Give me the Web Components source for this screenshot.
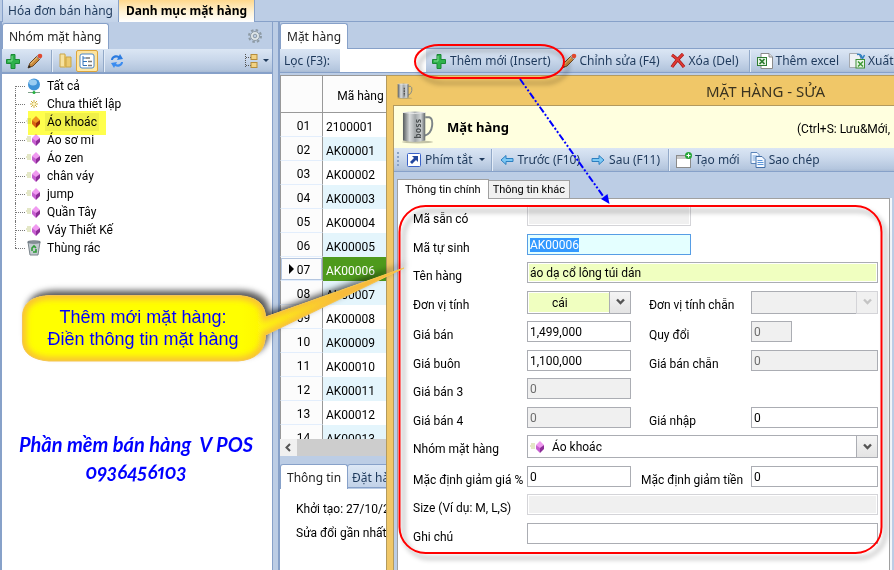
<!DOCTYPE html>
<html lang="vi">
<head>
<meta charset="utf-8">
<title>Danh mục mặt hàng</title>
<style>
  html, body { margin: 0; height: 100%; overflow: hidden; }
  body { background: #bccde5; color: #000; font: 12px/16px Roboto, "Liberation Sans", sans-serif;
    --ui: "Noto Sans", "Open Sans", sans-serif; --line: #87a1c9; --bg: #bccde5; --ink: #1e395b;
    --bar: linear-gradient(#dbe6f4, #cad8eb 45%, #b4c6de 90%, #a9bbd4); }
</style>
</head>
<body>
<pos-app></pos-app>
<script>
const define = (name, html, setup) => {
  const tpl = document.createElement('template');
  tpl.innerHTML = html;
  customElements.define(name, class extends HTMLElement {
    connectedCallback() {
      if (this.shadowRoot) return;
      const root = this.attachShadow({ mode: 'open' });
      root.append(tpl.content.cloneNode(true));
      if (setup) setup.call(this, root);
    }
  });
};

const gem = (a, b, c) => `<path d="M1 5h4M0 7h5M1 9h4" stroke="#c9cf8e"/><path d="M10 2l4 4-4 4-4-4z" fill="${a}"/><path d="M6 6l4 3v5l-4-4z" fill="${b}"/><path d="M14 6l-4 3v5l4-4z" fill="${c}"/>`;
const mug = `<defs><linearGradient id="m"><stop offset="0" stop-color="#555a5c"/><stop offset=".3" stop-color="#d9dcdd"/><stop offset=".55" stop-color="#a2a7a9"/><stop offset=".8" stop-color="#d0d4d5"/><stop offset="1" stop-color="#606668"/></linearGradient></defs>
  <ellipse cx="16" cy="32.500" rx="16" ry="1.500" fill="#8a8a70" opacity=".5"/><path d="M24 7h4q4 1 3 9-1 8-8 10" fill="none" stroke="#7d8588" stroke-width="2"/><path d="M1 2q12-2 23 0v29q-11 3-23 0z" fill="url(#m)"/><path d="M1 2q12 2 23 0" stroke="#eee" fill="none"/>`;
const ICONS = {
  plus: ['0 0 16 16', '<path d="M6 1.500h4v5h4.500v4H10v5H6v-5H1.500v-4H6z" fill="#2fb24c" stroke="#1b8a35"/><path d="M7 3v5H3" stroke="#7fdc8e" fill="none"/>'],
  pencil: ['0 0 16 16', '<path d="M1 15l2-5 7-7 3 3-7 7z" fill="#c98a3c" stroke="#6b4622"/><path d="M1 15l1-3 2 2z" fill="#222"/><path d="M3.500 11L10.500 4" stroke="#f4d08a"/><path d="M9.500 3.500l1.500-1.500 3 3-1.500 1.500z" fill="#b9bdc4" stroke="#666" stroke-width=".5"/><circle cx="13" cy="3" r="2.300" fill="#e0492f"/>'],
  folder: ['0 0 16 16', '<path d="M3 1h5v13H3z" fill="#f6e2a0" stroke="#c9a548"/><path d="M7 3l2-1v13l-2-1z" fill="#e2bd5c"/><path d="M9 4h5v10H9z" fill="#eccb70" stroke="#c9a548"/>'],
  listtree: ['0 0 16 16', '<rect x="1" y="1" width="14" height="14" rx="2" fill="#fff" stroke="#4a86c8"/><path d="M4 3v9.500M4 5h3M4 8.500h4M4 12.500h4" stroke="#3273b8" fill="none"/><path d="M7 5h4M9 8.500h4M9 12.500h4" stroke="#777" stroke-width="1.500"/>'],
  refresh: ['0 0 16 16', '<path d="M2 7c0-4 5-6 8-4l1-2 3 5-6 1 1-2C7 4 4 5 4 7z" fill="#2b7be0"/><path d="M14 9c0 4-5 6-8 4l-1 2-3-5 6-1-1 2c2 1 5 0 5-2z" fill="#3b8cf0"/>'],
  gear: ['0 0 16 16', '<circle cx="8" cy="8" r="6" fill="none" stroke="#8d9aa5" stroke-width="2" stroke-dasharray="2.500 2.200"/><circle cx="8" cy="8" r="4.500" fill="#dfe6e8" stroke="#8d9aa5"/><circle cx="8" cy="8" r="1.800" fill="#bccde5" stroke="#8d9aa5"/>'],
  foldertree: ['0 0 16 16', '<path d="M1.500 1v13M2 4.500h5M2 12.500h5" stroke="#555" stroke-dasharray="1 1" fill="none"/><rect x="7" y="1.500" width="6" height="5" fill="#f2d283" stroke="#b58d3c"/><rect x="7" y="9.500" width="6" height="5" fill="#f2d283" stroke="#b58d3c"/>'],
  globe: ['0 0 16 16', '<circle cx="8" cy="6.500" r="6" fill="#3f93d8"/><ellipse cx="7" cy="4.500" rx="4" ry="3" fill="#b9e0fa" opacity=".75"/><path d="M8 12.500v2M2 14.500h12" stroke="#7fa08a"/><circle cx="8" cy="14.500" r="1.500" fill="#26b23e"/>'],
  spark: ['0 0 16 16', '<path d="M8 4v8M4 8h8M5 5l6 6M11 5l-6 6" stroke="#cdae3c"/><circle cx="8" cy="8" r="1.500" fill="#fff6c0"/>'],
  gem: ['0 0 16 16', gem('#f09af0', '#c65fd0', '#8d2c98')],
  gemred: ['0 0 16 16', gem('#f09a6a', '#d8603a', '#98281a')],
  bin: ['0 0 16 16', '<path d="M2 2h12l-2 13H4z" fill="#c3cbd0" stroke="#7b858c"/><ellipse cx="8" cy="2" rx="6.500" ry="1.300" fill="#8a949b" stroke="#66707a" stroke-width=".7"/><path d="M6 11V8l2-2 2 2M10 9v3H7" stroke="#2f9c37" stroke-width="1.600" fill="none"/>'],
  cross: ['0 0 16 16', '<path d="M2 2c3 2 9 8 12 12M13 1C9 5 5 9 2 14" stroke="#a01818" stroke-width="3.200" fill="none"/><path d="M2 2c3 2 9 8 12 12M13 1C9 5 5 9 2 14" stroke="#e03a34" stroke-width="1.800" fill="none"/>'],
  excel: ['0 0 16 16', '<path d="M4 .5h8l3.500 3.500v11.500H4z" fill="#fff" stroke="#8b8b8b"/><path d="M12 .5V4h3.500" fill="#ddd" stroke="#8b8b8b"/><rect x=".5" y="4.500" width="9" height="8" fill="#e9f5e6" stroke="#2f7d32"/><path d="M2.500 6l5 5M7.500 6l-5 5" stroke="#2f7d32" stroke-width="1.700"/>'],
  export: ['0 0 16 16', '<path d="M.5.500h8l3 3v11H.5z" fill="#eef1f4" stroke="#a5a9ae"/><path d="M8 1.500q4-1 5 3M11 3l2.500 2.500L15.500 2" stroke="#2f7fc0" stroke-width="1.500" fill="none"/><rect x="7" y="6.500" width="8.500" height="8.500" fill="#eaf6e8" stroke="#3f8f36"/><path d="M9 8.500l5 5M14 8.500l-5 5" stroke="#3f9a36" stroke-width="1.500"/>'],
  shortcut: ['0 0 16 16', '<rect x="1.500" y="1.500" width="13" height="13" rx="1" fill="#fff" stroke="#3a62c8"/><path d="M6 4h6v6l-2-2-4 4-2-2 4-4z" fill="#23479e"/>'],
  left: ['0 0 16 16', '<path d="M2 8l5-4.500V6.500h7v3H7v3z" fill="#7cc8f4" stroke="#2c7fc0"/>'],
  right: ['0 0 16 16', '<path d="M14 8L9 3.500V6.500H2v3h7v3z" fill="#7cc8f4" stroke="#2c7fc0"/>'],
  newwin: ['0 0 16 16', '<rect x=".5" y="3.500" width="14" height="12" fill="#fff" stroke="#8b8b8b"/><path d="M1 5.500h13" stroke="#c8c8c8" stroke-width="3"/><circle cx="12.500" cy="3.500" r="3.500" fill="#27a537"/><path d="M12.500 1.500v4M10.500 3.500h4" stroke="#fff"/>'],
  copy: ['0 0 16 16', '<path d="M1 .5h6l2 2v9H1z" fill="#f3f8ff" stroke="#5b84b8"/><path d="M2.500 4h5M2.500 6h5M2.500 8h3" stroke="#76a6dc"/><path d="M6 4.500h6l3 3v8H6z" fill="#f3f8ff" stroke="#4570a8"/><path d="M7.500 8.500h5M7.500 10.500h6M7.500 12.500h6" stroke="#5b95d8"/>'],
  mug: ['0 0 33 34', mug + '<text transform="translate(20 29) rotate(-90)" font-family="Noto Sans" font-weight="bold" font-size="9" fill="#4b5052">boss</text>'],
  mugsmall: ['0 0 33 34', mug + '<path d="M15 10v18" stroke="#555" stroke-width="3" stroke-dasharray="4 1.500"/>']
};
define('ui-icon', `<style>:host{display:block;flex:none;width:16px;height:16px}:host([size=large]){width:32px;height:34px}svg{display:block;width:100%;height:100%}</style><svg fill="none" aria-hidden="true"></svg>`,
  function (root) {
    const [box, body] = ICONS[this.getAttribute('name')];
    const svg = root.querySelector('svg');
    svg.setAttribute('viewBox', box);
    svg.innerHTML = body;
  });

define('tool-button', `<style>
  :host{display:block;flex:none}
  button{display:flex;align-items:center;gap:3px;height:22px;margin:0;padding:0 4px;border:1px solid transparent;border-radius:2px;background:none;color:#1e395b;font:12px/16px var(--ui);white-space:nowrap}
  :host([icononly]) button{gap:0;padding:0 2px}
  :host([pressed]) button{background:linear-gradient(#fde3a0,#ffe9a8);border-color:#dba53c}
  i{border:3px solid transparent;border-top-color:#1e395b;border-bottom:0;margin-left:3px;display:none}
  :host([menu]) i{display:block}
  :host([menu]) button{padding-right:2px}
  </style><button type="button"><slot></slot><i></i></button>`,
  function (root) {
    const icon = document.createElement('ui-icon');
    icon.setAttribute('name', this.getAttribute('icon'));
    const button = root.querySelector('button');
    button.prepend(icon);
    if (this.title) button.setAttribute('aria-label', this.title);
  });

define('tool-bar', `<style>:host{display:flex;align-items:center;height:24px;box-sizing:border-box;background:var(--bar);border-bottom:1px solid var(--line);overflow:hidden}
  ::slotted(hr){flex:none;width:1px;height:22px;border:0;margin:0 2px 0 5px;background:#92a9c8;box-shadow:1px 0 #e4edf8}
  :host([compact]) ::slotted(hr){margin-left:3px}</style><slot></slot>`);

define('tab-button', `<style>
  :host{display:block;flex:none;margin-right:-1px}
  button{display:block;margin:0;height:26px;padding:0 6px;border:1px solid var(--line);border-bottom:0;border-radius:3px 3px 0 0;background:linear-gradient(#dce7f5,#c2d2e8);color:#1e395b;font:12px/25px var(--ui);white-space:nowrap}
  :host([active]) button{background:#fff;color:#222}
  :host([kind=doc]) button{height:22px;line-height:20px;border-radius:0;border-top:0;padding:0 5px}
  :host([kind=doc][active]) button{background:linear-gradient(#ffd88c,#fff3d6 55%,#fff);color:#000;font-weight:700;padding:0 7px}
  :host([kind=form]) button{height:18px;line-height:17px;padding:0 4px;border-radius:0;border-color:#a0a0a0;background:#f0f0f0;font-family:Roboto,sans-serif;font-size:11px;color:#000}
  :host([kind=form][active]) button{height:20px;line-height:18px;padding:0 7px;background:#fff}
  :host([kind=lower]:not([active])) button{height:24px;border-bottom:1px solid var(--line);padding:0 4px}
  </style><button type="button" role="tab"><slot></slot></button>`);

define('group-tree', `<style>
  :host{display:block;padding:3px 0 0 13px}
  ul{margin:0;padding:0;list-style:none}
  li{display:flex;align-items:center;height:18px;position:relative}
  li::before{content:"";width:10px;border-top:1px dotted #777;margin-right:1px}
  li::after{content:"";position:absolute;left:0;top:0;bottom:0;border-left:1px dotted #777}
  li:first-child::after{top:9px} li:last-child::after{bottom:9px}
  span{padding:1px 2px;margin-left:3px}
  .sel span{background:#f0f0f0}
  </style><ul></ul>`,
  function (root) {
    const rows = [['globe', 'Tất cả'], ['spark', 'Chưa thiết lập'], ['gemred', 'Áo khoác'], ['gem', 'Áo sơ mi'], ['gem', 'Áo zen'], ['gem', 'chân váy'], ['gem', 'jump'], ['gem', 'Quần Tây'], ['gem', 'Váy Thiết Kế'], ['bin', 'Thùng rác']];
    root.querySelector('ul').innerHTML = rows.map(([i, t], n) => `<li${n === 2 ? ' class="sel"' : ''}><ui-icon name="${i}"></ui-icon><span>${t}</span></li>`).join('');
  });

define('group-pane', `<style>
  :host{display:flex;flex-direction:column;min-width:0;border-left:2px solid var(--line);border-right:1px solid var(--line)}
  header{display:flex;justify-content:space-between;align-items:center;padding-top:1px;height:26px;padding-right:9px}
  group-tree{flex:1;background:#fff;border-top:1px solid var(--line)}
  .end{margin-left:auto}
  </style>
  <header><tab-button active>Nhóm mặt hàng</tab-button><ui-icon name="gear"></ui-icon></header>
  <tool-bar><tool-button icon="plus" icononly title="Thêm"></tool-button><tool-button icon="pencil" icononly title="Sửa"></tool-button><hr><tool-button icon="folder" icononly title="Thư mục"></tool-button><tool-button icon="listtree" icononly pressed title="Cây"></tool-button><hr><tool-button icon="refresh" icononly title="Làm mới"></tool-button><tool-button class="end" icon="foldertree" icononly menu title="Hiển thị"></tool-button></tool-bar>
  <group-tree></group-tree>`);

define('product-grid', `<style>
  :host{display:block;overflow:hidden;background:#fff;border-top:1px solid #999}
  table{border-collapse:separate;border-spacing:0;table-layout:fixed;width:100%}
  col.n{width:43px} col.c{width:75px}
  th,td{padding:3px 0 0;font-weight:400;box-sizing:border-box;height:24px;overflow:hidden;white-space:nowrap;text-align:left}
  thead th{height:37px;border-bottom:1px solid #999;background:#fcfcfc;text-align:center}
  th:first-child{border-left:1px solid #999;border-right:1px solid #999;padding-left:4px;text-align:center;background:#fcfcfc}
  tbody th{border-bottom:1px solid #e3eefc}
  td{padding-left:3px}
  tr:nth-child(even) td{background:#e4f5fc}
  tr.cur td{background:#4e9a1c;color:#fff}
  tr.cur th{outline:1px solid #b4c6e0;outline-offset:-2px}
  tr.cur th::before{content:"";float:left;border:5px solid transparent;border-left-color:#000;border-right:0;margin:2px -9px 0 4px}
  </style><table><colgroup><col class="n"><col class="c"><col></colgroup><thead><tr><th></th><th>Mã hàng</th><th></th></tr></thead><tbody></tbody></table>`,
  function (root) {
    root.querySelector('tbody').innerHTML = Array.from({ length: 14 }, (_, i) => {
      const n = String(i + 1).padStart(2, '0');
      return `<tr${i === 6 ? ' class="cur"' : ''}><th scope="row">${n}</th><td>${i ? 'AK' + String(i).padStart(5, '0') : '2100001'}</td><td></td></tr>`;
    }).join('');
  });

define('product-pane', `<style>
  :host{display:flex;flex-direction:column;min-width:0;border-left:2px solid var(--line)}
  nav{display:flex;height:27px;box-sizing:border-box;padding-top:1px;border-bottom:1px solid var(--line)}
  nav tab-button{margin-bottom:-1px}
  .filter{display:flex;align-items:center;align-self:stretch;font:12px/16px var(--ui);color:var(--ink)}
  label{width:60px;padding-left:4px;box-sizing:border-box}
  input{box-sizing:border-box;width:86px;align-self:stretch;border:0;padding:0 4px;background:#fff}
  product-grid{flex:1;min-height:0;margin-top:2px}
  .scroll{display:flex;align-items:center;height:17px;background:#cdcdcd}
  .scroll button{width:17px;height:17px;border:0;padding:0;background:#f0f0f0}
  .scroll svg{display:block;margin:auto}
  .tabs{display:flex;align-items:flex-start;height:25px;margin-top:8px}
  .info{height:81px;background:#fff;padding:12px 16px;box-sizing:border-box}
  .info p{margin:0;height:24px;line-height:16px}
  </style>
  <nav><tab-button active>Mặt hàng</tab-button></nav>
  <tool-bar><div class="filter"><label for="f">Lọc (F3):</label><input id="f"></div>
  <tool-button icon="plus">Thêm mới (Insert)</tool-button><tool-button icon="pencil">Chỉnh sửa (F4)</tool-button><tool-button icon="cross">Xóa (Del)</tool-button><hr><tool-button icon="excel">Thêm excel</tool-button><tool-button icon="export">Xuất</tool-button></tool-bar>
  <product-grid></product-grid>
  <div class="scroll"><button type="button" aria-label="Cuộn trái"><svg width="9" height="9" viewBox="0 0 9 9"><path d="M6 1L2.500 4.500 6 8" stroke="#555" stroke-width="2" fill="none"/></svg></button></div>
  <div class="tabs"><tab-button kind="lower" active>Thông tin</tab-button><tab-button kind="lower">Đặt hàng</tab-button></div>
  <div class="info"><p>Khởi tạo: 27/10/2</p><p>Sửa đổi gần nhất</p></div>`);

define('form-field', `<style>
  :host{display:contents}
  label{grid-column:1;align-self:start;padding-top:6px;margin-bottom:-1px;line-height:16px;white-space:nowrap}
  .box{grid-column:2;display:grid;min-width:0}
  :host([side=right]) label{grid-column:3;padding-left:18px}
  :host([near]) label{padding-left:10px!important}
  :host([side=right]) .box{grid-column:4}
  :host([span]) .box{grid-column:2 / 5}
  :host([span=code]) .box{width:164px}
  :host([side=right][short]) .box{width:41px}
  input,select{grid-area:1/1;width:100%;height:21px;box-sizing:border-box;margin:0;padding:1px 2px 0;border:1px solid #abadb3;border-radius:0;background:#fff;color:#000;font:12px/16px Roboto,sans-serif;outline:0;appearance:none}
  select{height:23px;padding-left:24px}
  :disabled{background:#f0f0f0;color:#6d6d6d;opacity:1}
  :host([soft]) input{border-color:#d4d4d8;box-shadow:inset 0 0 0 1px #fff}
  :host([tint=green]) input,:host([tint=green]) select{background:#f0ffc0;box-shadow:inset 0 0 0 1px #fff}
  :host([tint=cyan]) input{background:#e4ffff;border-color:#569de5}
  ::selection{background:#3399ff;color:#fff}
  .arrow{grid-area:1/1;justify-self:end;width:22px;height:23px;box-sizing:border-box;border:1px solid #abadb3;background:linear-gradient(#f4f4f4,#e4e4e4);display:grid;place-items:center;pointer-events:none;color:#555}
  :host([disabled]) .arrow{color:#c4c4c4;background:#f0f0f0;border-color:#d4d4d8}
  .ic{grid-area:1/1;place-self:center start;margin-left:3px;pointer-events:none}
  </style><label for="c"></label><div class="box"></div>`,
  function (root) {
    const a = n => this.getAttribute(n) || '';
    root.querySelector('label').textContent = a('label');
    const off = this.hasAttribute('disabled') ? ' disabled' : '';
    root.querySelector('.box').innerHTML = this.hasAttribute('select')
      ? `<select id="c"${off}><option>${a('value')}</option></select><span class="arrow"><svg width="9" height="8" viewBox="0 0 9 8"><path d="M1 1.500L4.500 5 8 1.500" stroke="currentColor" stroke-width="2.400" fill="none"/></svg></span>${a('icon') ? `<ui-icon class="ic" name="${a('icon')}"></ui-icon>` : ''}`
      : `<input id="c" value="${a('value')}"${off}>`;
    if (this.hasAttribute('selected')) { const i = root.querySelector('input'); i.focus(); i.select(); }
  });

define('item-form', `<style>
  :host{display:grid;grid-template-columns:114px 104px 120px minmax(0,1fr);align-content:space-between;min-height:339px}
  </style>
  <form-field label="Mã sẵn có" span="code" disabled soft></form-field>
  <form-field label="Mã tự sinh" span="code" tint="cyan" value="AK00006" selected></form-field>
  <form-field label="Tên hàng" span tint="green" value="áo dạ cổ lông túi dán"></form-field>
  <form-field label="Đơn vị tính" select tint="green" value="cái"></form-field>
  <form-field label="Đơn vị tính chẵn" side="right" select disabled></form-field>
  <form-field label="Giá bán" value="1,499,000"></form-field>
  <form-field label="Quy đổi" side="right" short disabled value="0"></form-field>
  <form-field label="Giá buôn" value="1,100,000"></form-field>
  <form-field label="Giá bán chẵn" side="right" disabled value="0"></form-field>
  <form-field label="Giá bán 3" disabled value="0"></form-field>
  <form-field label="Giá bán 4" disabled value="0"></form-field>
  <form-field label="Giá nhập" side="right" value="0"></form-field>
  <form-field label="Nhóm mặt hàng" span select icon="gem" value="Áo khoác"></form-field>
  <form-field label="Mặc định giảm giá %" value="0"></form-field>
  <form-field label="Mặc định giảm tiền" side="right" near value="0"></form-field>
  <form-field label="Size (Ví dụ: M, L,S)" span disabled soft></form-field>
  <form-field label="Ghi chú" span></form-field>`);

define('item-dialog', `<style>
  :host{display:flex;flex-direction:column;box-sizing:border-box;background:#f0c768;border:1px solid #b39a5e;border-width:1px 0 0 1px;padding-left:6px}
  .title{display:flex;align-items:center;height:29px;padding-left:4px}
  h1{margin:0;padding-left:293px;font:15px/20px var(--ui);color:#3a3320;white-space:nowrap}
  .body{flex:1;display:flex;flex-direction:column;border:1px solid #b39a5e;border-width:1px 0 0 1px;background:var(--bg)}
  .head{display:flex;align-items:center;height:42px;background:#ffffdf;padding:0 4px 0 8px}
  h2{margin:0 0 0 13px;font:700 13px/18px var(--ui)}
  .head span{margin:4px 0 0 auto;white-space:nowrap}
  .grip{width:2px;height:16px;margin:0 2px 0 3px;background:repeating-linear-gradient(#8aa2c4 0 2px,transparent 2px 4px)}
  .tabs{display:flex;align-items:flex-end;padding:7px 0 0 3px}
  .tabs tab-button[active]{margin-bottom:-1px;position:relative}
  .page{flex:1;margin:0 4px 0 3px;border:1px solid #a0a0a0;border-bottom:0;background:#fff;padding:6px 11px 0 15px;box-shadow:2px 0 #f4f7fb}
  </style>
  <div class="title"><ui-icon name="mugsmall"></ui-icon><h1>MẶT HÀNG - SỬA</h1></div>
  <div class="body">
    <div class="head"><ui-icon name="mug" size="large"></ui-icon><h2>Mặt hàng</h2><span>(Ctrl+S: Lưu&amp;Mới,</span></div>
    <tool-bar compact><span class="grip"></span><tool-button icon="shortcut" menu>Phím tắt</tool-button><hr><tool-button icon="left">Trước (F10)</tool-button><tool-button icon="right">Sau (F11)</tool-button><hr><tool-button icon="newwin">Tạo mới</tool-button><tool-button icon="copy">Sao chép</tool-button></tool-bar>
    <div class="tabs"><tab-button kind="form" active>Thông tin chính</tab-button><tab-button kind="form">Thông tin khác</tab-button></div>
    <div class="page"><item-form></item-form></div>
  </div>`);

define('help-notes', `<style>
  :host{display:block;pointer-events:none}
  svg{position:absolute;left:0;top:0;overflow:visible}
  .mark{position:absolute;left:28px;top:111px;width:78px;height:24px;background:#ffff4d;mix-blend-mode:multiply}
  .callout{position:absolute;left:23px;top:306px;width:240px;text-align:center;font:18px/22px "Liberation Sans",sans-serif;color:#00f;white-space:nowrap}
  .sign{position:absolute;left:3px;top:431px;width:266px;text-align:center;font:italic 700 20px/27px Lato,sans-serif;font-variant-numeric:oldstyle-nums proportional-nums;color:#00f;white-space:pre}
  p{margin:0}
  </style>
  <div class="mark"></div>
  <svg width="894" height="570" viewBox="0 0 894 570" fill="none" aria-hidden="true">
    <defs>
      <filter id="s" x="-10%" y="-30%" width="120%" height="170%"><feDropShadow dx="4" dy="5" stdDeviation="2.500" flood-color="#000" flood-opacity=".4"/></filter>
      <filter id="t" x="-10%" y="-30%" width="120%" height="160%"><feDropShadow dx="4" dy="-5" stdDeviation="3" flood-color="#000" flood-opacity=".65"/></filter>
      <filter id="b" x="-10%" y="-10%" width="120%" height="120%"><feGaussianBlur stdDeviation="3"/></filter>
      <linearGradient id="g" gradientUnits="userSpaceOnUse" x1="240" y1="0" x2="404" y2="0"><stop offset="0" stop-color="#ff0"/><stop offset="1" stop-color="#fbc63a"/></linearGradient>
      <path id="p" d="M49 295.500H238Q265 297 265.500 317L404 268 265.500 335Q265 359 238 361H49Q23 359 22.500 341V316Q23 297 49 295.500z"/>
      <clipPath id="c"><use href="#p"/></clipPath>
    </defs>
    <g filter="url(#s)" stroke="#f00" stroke-width="2"><rect x="415" y="45" width="149" height="33" rx="24" ry="16.500"/><rect x="399.500" y="206" width="482" height="347" rx="26"/></g>
    <path d="M520 79L603 196" stroke="#00f" stroke-width="2" stroke-dasharray="7 2 2 2 2 2"/><path d="M609.500 204l-8.500-5 6.500-5z" fill="#00f"/>
    <use href="#p" fill="url(#g)" filter="url(#t)"/>
    <g clip-path="url(#c)"><use href="#p" stroke="#f8b93c" stroke-width="7" filter="url(#b)"/></g>
    <use href="#p" stroke="#f5c552" stroke-width="1"/>
  </svg>
  <div class="callout"><p>Thêm mới mặt hàng:</p><p>Điền thông tin mặt hàng</p></div>
  <div class="sign"><p>Phần mềm bán hàng  V POS</p><p>0936456103</p></div>`);

define('pos-app', `<style>
  :host{display:flex;flex-direction:column;height:100vh;position:relative;background:var(--bg);overflow:hidden}
  nav{display:flex;height:22px;box-sizing:border-box;padding-left:2px;border-bottom:1px solid var(--line)}
  main{flex:1;min-height:0;display:grid;grid-template:minmax(0,1fr) / 273px minmax(0,1fr);column-gap:5px}
  item-dialog{position:absolute;left:386px;top:75px;right:0;bottom:0}
  help-notes{position:absolute;inset:0}
  </style>
  <nav><tab-button kind="doc">Hóa đơn bán hàng</tab-button><tab-button kind="doc" active>Danh mục mặt hàng</tab-button></nav>
  <main><group-pane></group-pane><product-pane></product-pane></main>
  <item-dialog></item-dialog>
  <help-notes></help-notes>`);
</script>
</body>
</html>
